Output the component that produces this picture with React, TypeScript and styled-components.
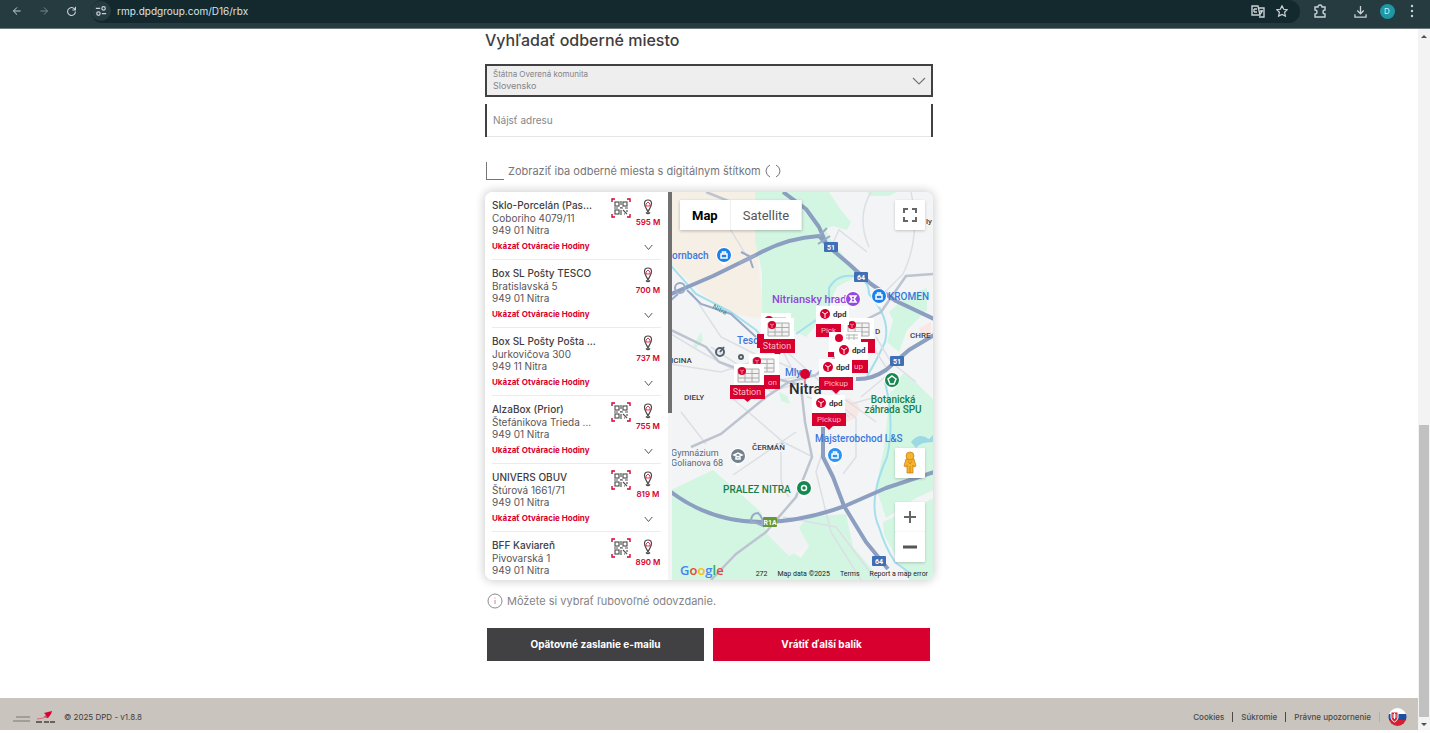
import React from "react";
import styled, { createGlobalStyle } from "styled-components";

const colors = {
  red: "#d8002f",
  dark: "#414042",
  text: "#3f3d3e",
  muted: "#77757a",
};

const GlobalStyle = createGlobalStyle`
  * { box-sizing: border-box; }
  body { margin: 0; background: #fff; font-family: Inter, "Liberation Sans", sans-serif; color: ${colors.text}; }
  button, input, select { font-family: inherit; }
`;

const Window = styled.div`
  display: flex;
  flex-direction: column;
  min-height: 100vh;
  padding-bottom: 3px;
`;

/* Browser bar */
const BrowserBar = styled.header`
  display: flex;
  align-items: center;
  height: 29px;
  padding: 0 0 6px 9px;
  background: #263b40;
  border-bottom: 1px solid #6c797c;
  color: #c9d2d4;
`;

const BarButton = styled.button<{ $dim?: boolean; $width?: number }>`
  display: flex;
  align-items: center;
  justify-content: center;
  flex: none;
  width: ${(p) => p.$width ?? 27}px;
  height: 20px;
  padding: 0;
  border: 0;
  background: none;
  color: inherit;
  opacity: ${(p) => (p.$dim ? 0.5 : 1)};
`;

const AddressBar = styled.div`
  display: flex;
  align-items: center;
  flex: 1;
  height: 23px;
  margin-left: 12px;
  padding-right: 6px;
  border-radius: 12px;
  background: #14292e;
`;

const SiteButton = styled(BarButton)`
  border-radius: 10px;
  background: #263b40;
`;

const AddressInput = styled.input`
  flex: 1;
  min-width: 0;
  padding: 0 0 0 6px;
  border: 0;
  background: none;
  color: #dce4e6;
  font-size: 10px;
`;

const Avatar = styled.span`
  flex: none;
  width: 15px;
  height: 15px;
  border-radius: 50%;
  background: #1f97a5;
  color: #d5f0f3;
  font-size: 8px;
  line-height: 15px;
  text-align: center;
`;

/* Page */
const Viewport = styled.div`
  display: flex;
  flex: 1;
`;

const Page = styled.div`
  display: flex;
  flex-direction: column;
  flex: 1;
  min-width: 0;
`;

const Scrollbar = styled.div`
  display: flex;
  flex-direction: column;
  align-items: center;
  justify-content: flex-end;
  width: 12px;
  padding-top: 6px;
  background: #f3f3f3;
`;

const ScrollSpace = styled.div`
  flex: 1;
`;

const ScrollThumb = styled.div`
  width: 10px;
  height: 42%;
  background: #c1c1c1;
`;

const ScrollArrow = styled.span<{ $down?: boolean }>`
  width: 0;
  border: 3px solid transparent;
  border-width: ${(p) => (p.$down ? "3px 3px 0" : "0 3px 3px")};
  border-${(p) => (p.$down ? "top" : "bottom")}-color: #505050;
  margin: ${(p) => (p.$down ? "6px 0 4px" : "0")};
`;

const Main = styled.main`
  display: flex;
  flex-direction: column;
  flex: 1;
  width: 100%;
  max-width: 448px;
  margin: 0 auto;
  padding: 1px 0 37px;
`;

const Title = styled.h1`
  margin: 0 0 14px;
  font-size: 16px;
  line-height: 20px;
  font-weight: 500;
`;

const CountryField = styled.div`
  position: relative;
  display: flex;
  flex-direction: column;
  height: 33px;
  padding: 2px 6px;
  border: 2px solid ${colors.dark};
  background: #eee;
`;

const FieldLabel = styled.label`
  font-size: 8px;
  line-height: 12px;
  color: #858387;
`;

const CountrySelect = styled.select`
  appearance: none;
  width: 100%;
  height: 12px;
  padding: 0;
  border: 0;
  background: none;
  color: #858387;
  font-size: 9px;
  line-height: 12px;
  opacity: 1;
`;

const SelectArrow = styled.svg`
  position: absolute;
  right: 5px;
  top: 11px;
`;

const AddressField = styled.input`
  width: 100%;
  height: 33px;
  margin: 7px 0 25px;
  padding: 0 6px 2px;
  border: solid ${colors.dark};
  border-width: 0 2px;
  border-radius: 0;
  box-shadow: inset 0 -1px #e6e6e6;
  font-size: 10px;
  &::placeholder { color: #85868c; opacity: 1; }
`;

const CheckRow = styled.div`
  display: flex;
  align-items: center;
  gap: 4px;
  height: 18px;
  margin-bottom: 12px;
  color: ${colors.muted};
  font-size: 11px;
  line-height: 18px;
`;

const CheckBox = styled.input`
  appearance: none;
  width: 18px;
  height: 18px;
  margin: 0 0 0 1px;
  border: solid #77757a;
  border-width: 0 0 1px 1px;
`;

const Finder = styled.section`
  display: flex;
  height: 388px;
  border-radius: 8px;
  overflow: hidden;
  box-shadow: 0 0 8px 2px rgba(0, 0, 0, 0.17);
`;

const PlaceList = styled.ul`
  flex: 0 0 183px;
  height: 100%;
  margin: 0;
  padding: 0;
  overflow: hidden;
  list-style: none;
  background: #fff;
`;

const ListScroll = styled.div`
  flex: 0 0 4px;
  background: linear-gradient(#707070 0 57%, #f5f5f5 57%);
`;

const Place = styled.li`
  display: grid;
  grid-template-columns: minmax(0, 1fr) 28px 26px;
  align-content: start;
  height: 68px;
  margin: 0 7px;
  padding-top: 6px;
  border-bottom: 1px solid #ececec;
`;

const PlaceText = styled.address`
  font-style: normal;
  font-size: 10px;
  line-height: 12px;
  color: #58565a;
  white-space: nowrap;
`;

const PlaceName = styled.div`
  font-weight: 500;
  line-height: 14px;
  color: ${colors.text};
`;

const PlaceIcon = styled.div`
  display: flex;
  flex-direction: column;
  align-items: center;
  height: 38px;
  font-size: 8px;
  line-height: 12px;
  font-weight: 600;
  color: ${colors.red};
  white-space: nowrap;
`;

const HoursButton = styled.button`
  display: flex;
  grid-column: 1 / -1;
  align-items: center;
  justify-content: space-between;
  height: 12px;
  margin-top: 4px;
  padding: 0 8px 0 0;
  border: 0;
  background: none;
  color: ${colors.red};
  font-size: 8px;
  line-height: 12px;
  font-weight: 700;
`;

const MapPanel = styled.div`
  position: relative;
  flex: 1;
  min-width: 0;
  background: #f2f3f5;
`;

const MapSvg = styled.svg`
  display: block;
  width: 100%;
  height: 100%;
`;

const MapTypes = styled.div`
  position: absolute;
  left: 8px;
  top: 8px;
  display: flex;
  box-shadow: 0 1px 3px rgba(0, 0, 0, 0.25);
`;

const MapTypeButton = styled.button<{ $active?: boolean }>`
  height: 30px;
  padding: 0 12px;
  border: 0;
  border-right: 1px solid #eee;
  background: #fff;
  color: ${(p) => (p.$active ? "#000" : "#565656")};
  font-family: Roboto, sans-serif;
  font-size: 13px;
  font-weight: ${(p) => (p.$active ? 700 : 400)};
`;

const MapTools = styled.div`
  position: absolute;
  inset: 8px 8px 18px auto;
  display: flex;
  flex-direction: column;
  width: 30px;
`;

const MapTool = styled.button<{ $bottom?: boolean; $gap?: number }>`
  display: flex;
  align-items: center;
  justify-content: center;
  height: 30px;
  margin-top: ${(p) => (p.$bottom ? "auto" : "0")};
  margin-bottom: ${(p) => p.$gap ?? 0}px;
  padding: 0;
  border: 0;
  border-radius: 1px;
  background: #fff;
  box-shadow: 0 1px 3px rgba(0, 0, 0, 0.2);
`;

const MapCredits = styled.div`
  position: absolute;
  left: 8px;
  right: 5px;
  bottom: 1px;
  display: flex;
  align-items: flex-end;
  justify-content: space-between;
  color: #222;
  font-family: Roboto, sans-serif;
  font-size: 7px;
  line-height: 10px;
  white-space: nowrap;
`;

const CreditLinks = styled.div`
  display: flex;
  gap: 10px;
`;

const CreditLink = styled.a`
  color: inherit;
  text-decoration: none;
`;

const GoogleMark = styled.span`
  font-family: "Open Sans", sans-serif;
  font-size: 13px;
  line-height: 18px;
  font-weight: 600;
`;

const Letter = styled.span<{ $color: string }>`
  color: ${(p) => p.$color};
`;

const Note = styled.p`
  display: flex;
  align-items: center;
  gap: 4px;
  margin: 12px 0 18px;
  padding-left: 2px;
  color: #858387;
  font-size: 11px;
  line-height: 18px;
`;

const Actions = styled.div`
  display: grid;
  grid-template-columns: 1fr 1fr;
  gap: 9px;
  padding: 0 3px 0 2px;
`;

const ActionButton = styled.button<{ $primary?: boolean }>`
  height: 33px;
  padding: 0 0 2px;
  border: 0;
  background: ${(p) => (p.$primary ? colors.red : colors.dark)};
  color: #fff;
  font-size: 10px;
  font-weight: 700;
`;

const Footer = styled.footer`
  display: flex;
  align-items: center;
  justify-content: space-between;
  height: 32px;
  padding: 6px 11px 0 13px;
  background: #cac4be;
  font-size: 8px;
  line-height: 12px;
`;

const FooterGroup = styled.div<{ $gap?: number }>`
  display: flex;
  align-items: center;
  gap: ${(p) => p.$gap ?? 8}px;
`;

const FooterLink = styled.a`
  padding-right: 8px;
  border-right: 1px solid #4b4846;
  color: #4b4846;
  font-weight: 500;
  line-height: 10px;
  text-decoration: none;
  &:last-of-type { border-color: #b5afaa; }
`;

const Version = styled.span`
  font-size: 8px;
`;

const places = [
  { name: "Sklo-Porcelán (Pas...", street: "Coboriho 4079/11", city: "949 01 Nitra", distance: "595 M", qr: true, hours: true },
  { name: "Box SL Pošty TESCO", street: "Bratislavská 5", city: "949 01 Nitra", distance: "700 M", qr: false, hours: true },
  { name: "Box SL Pošty Pošta ...", street: "Jurkovičova 300", city: "949 11 Nitra", distance: "737 M", qr: false, hours: true },
  { name: "AlzaBox (Prior)", street: "Štefánikova Trieda ...", city: "949 01 Nitra", distance: "755 M", qr: true, hours: true },
  { name: "UNIVERS OBUV", street: "Štúrová 1661/71", city: "949 01 Nitra", distance: "819 M", qr: true, hours: true },
  { name: "BFF Kaviareň", street: "Pivovarská 1", city: "949 01 Nitra", distance: "890 M", qr: true, hours: false },
];

const QrIcon = () => (
  <svg width="20" height="20" viewBox="0 0 20 20" aria-hidden="true">
    <path d="M1 4V1h3M16 1h3v3M19 16v3h-3M4 19H1v-3" fill="none" stroke={colors.red} strokeWidth="1.4" />
    <g fill="none" stroke="#555" strokeWidth="1.2">
      <rect x="4" y="4" width="4" height="4" />
      <rect x="12" y="4" width="4" height="4" />
      <rect x="4" y="12" width="4" height="4" />
      <path d="M10 3v4M3 10h4M9 10h3M14 10h3M10 12v5M12 12l4 4M13 16h1M16 12v2M10 9v1" />
    </g>
  </svg>
);

const PinIcon = () => (
  <svg width="10" height="18" viewBox="0 0 10 18" aria-hidden="true">
    <path d="M5 14C4 11 1.500 9 1.500 5.500a3.500 3.500 0 0 1 7 0C8.500 9 6 11 5 14z" fill="none" stroke="#4a484a" strokeWidth="1.200" />
    <path d="M3 6l2-2 2 2v2H3z" fill="none" stroke={colors.red} strokeWidth=".8" />
    <path d="M3 14.500q2 2 4 0" fill="none" stroke="#4a484a" strokeWidth="1.500" />
  </svg>
);

const Chevron = ({ size = 9 }: { size?: number }) => (
  <svg width={size} height={size} viewBox="0 0 12 12" fill="none" stroke="#555" aria-hidden="true">
    <path d="M1 4l5 6 5-6" strokeWidth="1.300" />
  </svg>
);

const Line = ({ children, size = 14 }: { children: React.ReactNode; size?: number }) => (
  <svg width={size} height={size} viewBox="0 0 14 14" fill="none" stroke="currentColor" strokeWidth="1.400" aria-hidden="true">
    {children}
  </svg>
);

/* Locker marker: a white card with a cabinet and the red name plate below. */
const StationPin = ({ x, y, label, pointer }: { x: number; y: number; label?: string; pointer?: boolean }) => (
  <g transform={`translate(${x} ${y})`}>
    <rect x="4" width="30" height="22" fill="#fff" />
    <rect y="21" width="35" height="14" fill={colors.red} />
    {pointer && <path d="M14 35h7l-3.500 3z" fill={colors.red} />}
    <path d="M8 5h21v13H8zM8 9.500h21M8 14h21M15 5v13M22 5v13" fill="#f3f3f3" stroke="#aaa" strokeWidth="1" />
    <circle cx="12" cy="7" r="4" fill={colors.red} />
    <path d="M10 6l2 1 2-1M12 7v3" stroke="#f6a2b2" strokeWidth=".8" fill="none" />
    {label && <text x="17" y="31" fill="#ffb9c6" fontSize="9" textAnchor="middle">{label}</text>}
  </g>
);

/* Parcel shop marker: the logo card and its name plate. */
const PickupPin = ({ x, y, label = "Pickup", plateX = 0, plateWidth = 34, pointer }: { x: number; y: number; label?: string; plateX?: number; plateWidth?: number; pointer?: boolean }) => (
  <g transform={`translate(${x} ${y})`}>
    <rect width="33" height="19" fill="#fff" />
    <rect x={plateX} y="18" width={plateWidth} height="13" fill={colors.red} />
    {pointer && <path d="M13 31h8l-4 4z" fill={colors.red} />}
    <circle cx="9" cy="8" r="5" fill={colors.red} />
    <path d="M6 6l3 2 3-2M9 8v4" stroke="#fff" strokeWidth="1" fill="none" />
    <text x="17" y="11" fill="#333" fontSize="8" fontWeight="700">dpd</text>
    <text x={plateX + plateWidth / 2} y="27" fill="#ffb9c6" fontSize="8" textAnchor="middle">{label}</text>
  </g>
);

const PoiDot = ({ x, y, color, children }: { x: number; y: number; color: string; children?: React.ReactNode }) => (
  <g transform={`translate(${x} ${y})`}>
    <path d="M-8 0a8 8 0 0 1 16 0c0 5-5 7-8 11C-3 7-8 5-8 0z" fill="#fff" />
    <circle r="7" fill={color} />
    <g fill="none" stroke="#fff" strokeWidth="1.500">{children}</g>
  </g>
);

const bag = <path d="M-3 -1h6v4h-6zM-1.500 -1v-2h3v2" />;

const Shield = ({ x, y, label, color = "#3f6fb5" }: { x: number; y: number; label: string; color?: string }) => (
  <g transform={`translate(${x} ${y})`}>
    <rect x="-7" y="-5" width="14" height="10" rx="1" fill={color} />
    <text y="3" fill="#fff" fontSize="7" fontWeight="700" textAnchor="middle">{label}</text>
  </g>
);

const CityMap = () => (
  <MapSvg viewBox="0 0 263 388" preserveAspectRatio="xMidYMid slice" fontFamily="Roboto, sans-serif" role="img" aria-label="Nitra">
    <rect width="263" height="388" fill="#f3f4f6" />
    <path d="M0 0H90L87 70 93 123 85 126 50 119 0 72z" fill="#f6efe5" />
    <g fill="#d3f6e2">
      <path d="M84 0H140L158 45 176 68 190 82 166 95 158 112 150 127 135 145 115 135 91 125 91 80 84 50z" />
      <path d="M135 0h23l12 18 10 12-4 8-14-4-12 4zM196 0h30l-8 4h-18z" />
      <path d="M218 120l20-18 18-6v22l-20 20-8 22-12-10 6-22zM24 158l8-10 -2-8-8 14z" />
      <path d="M220 195l14-15 29 28v90l-18 8-30 20-10-30 8-40z" />
      <path d="M0 298L42 278 90 320 96 342 130 366 138 354 125 340 135 325 175 322 182 355 210 388H0z" />
      <path d="M212 330l51-24v82h-25l-25-45zM108 200l8 4 3 8-9-3z" />
    </g>
    <path d="M96 342l22 22 20-10-10-18 8-10-24 4z" fill="#f1f2f4" />
    <path d="M175 230q18-6 12-18l-10-6-12 20zM248 136l12-6v14l-10-2z" fill="#f8e7e4" />

    <g fill="none" stroke="#a3e0ec" strokeWidth="2">
      <path d="M0 74L25 102 60 120 85 138 101 158" />
      <path d="M158 115V96Q166 82 182 84T198 102Q220 126 214 150 205 170 196 184M214 190Q224 230 216 265 196 310 208 335 214 355 224 370L240 382" />
      <path d="M125 142L145 128" />
    </g>
    <path d="M240 250q8-10 18-3l5-5v8q-14 0-18 6z" fill="#9cd9e4" />

    <g fill="none" stroke="#dcdfe5" strokeWidth="1.500">
      <path d="M58 35L78 68M160 55L168 38 196 60M200 0Q185 25 198 55M240 0Q250 45 232 82L214 100" />
      <path d="M0 142L30 160 90 192 140 182 175 208 205 230M0 172L50 180 95 165 130 180" />
      <path d="M40 155L75 178 100 200 130 190M10 220L35 252M60 205L112 250 142 265M62 283L125 240M136 205L165 212 178 225" />
      <path d="M20 100L50 145 90 165 110 150M116 160L155 195 180 212 205 205M100 135L120 175 140 198M165 210L185 226 185 265 172 282" />
      <path d="M110 260V285Q110 295 118 305M152 258L145 280 160 340 190 388M112 325L165 335 180 355 205 388" />
      <path d="M205 145L220 170 245 190M192 140L215 175M220 180L190 205" />
    </g>
    <g fill="none" stroke="#bdc4d0" strokeWidth="2.500">
      <path d="M35 0L60 10 40 30M0 138L35 155 48 170 70 178 95 184 125 192" />
      <path d="M20 255L50 242 95 205 118 190 145 183M130 195L134 230 141 265 125 305 95 340 65 362 40 388" />
      <path d="M263 82L235 84 210 120 190 130M145 183L170 160" />
    </g>
    <g fill="none" stroke="#8c9fc0" strokeWidth="4" strokeLinejoin="round">
      <path d="M0 102L14 96 42 84 85 63Q115 46 148 44L158 55 178 72 200 92 225 109 263 127" />
      <path d="M112 0L135 17 148 35 155 51M185 187Q200 188 215 178L238 158 263 143" />
      <path d="M0 300Q40 330 90 330 130 330 174 314L215 296 263 280" />
      <path d="M152 235L152 265 162 285 173 314 195 350 217 377" />
    </g>
    <g fill="none" stroke="#9aa9c5" strokeWidth="2">
      <circle cx="9" cy="96" r="5" />
      <path d="M70 60l8 4 4 12M68 71l17-8M16 98L30 112 60 122 85 145M0 108l7-6" />
      <path d="M80 330q0-9 7-9 5 4 5 13l-9-4z" />
      <path d="M148 44l8-8M147 52l12-8" />
    </g>

    <g fontSize="10" fontWeight="500" fill="#3b78dc">
      <text x="1" y="67">ornbach</text>
      <text x="217" y="108">KROMEN</text>
      <text x="66" y="152">Tesc</text>
      <text x="114" y="184">Mlyny</text>
      <text x="144" y="250">Majsterobchod L&amp;S</text>
    </g>
    <text x="101" y="111" fontSize="11" fontWeight="500" fill="#9145d9">Nitriansky hrad</text>
    <text x="41" y="116" fontSize="7" fill="#298b9b" transform="rotate(28 41 116)">Nitra</text>
    <g fontSize="8" fontWeight="500" fill="#3b4046">
      <text x="0" y="171">ICINA</text>
      <text x="13" y="208">DIELY</text>
      <text x="81" y="258">ČERMÁŇ</text>
      <text x="204" y="142">D</text>
      <text x="239" y="146">CHRE</text>
      <text x="255" y="32">ly</text>
    </g>
    <g fontSize="9" fill="#5b6975">
      <text x="0" y="264">Gymnázium</text>
      <text x="0" y="274">Golianova 68</text>
    </g>
    <g fontSize="10" fontWeight="500" fill="#16804b">
      <text x="52" y="301">PRALEZ NITRA</text>
      <text x="222" y="211" textAnchor="middle">Botanická</text>
      <text x="222" y="221" textAnchor="middle">záhrada SPU</text>
    </g>
    <PoiDot x={53} y={63} color="#1c80eb">{bag}</PoiDot>
    <PoiDot x={208} y={104} color="#1c80eb">{bag}</PoiDot>
    <PoiDot x={164} y={263} color="#2b93f0">{bag}</PoiDot>
    <PoiDot x={182} y={107} color="#9349e0"><path d="M-3 3h6l-2-3 2-3h-6l2 3z" /></PoiDot>
    <PoiDot x={221} y={188} color="#16884f"><path d="M0-4l4 3-2 5h-4l-2-5z" /></PoiDot>
    <PoiDot x={133} y={296} color="#16884f"><circle r="2.500" /></PoiDot>
    <PoiDot x={67} y={264} color="#71818e"><path d="M-4-1l4-2 4 2-4 2zM-2 1v2h4v-2" /></PoiDot>
    <g fill="none" stroke="#53616d" strokeWidth="2">
      <circle cx="49" cy="160" r="4" />
      <path d="M49 160l4-5" />
      <circle cx="70" cy="165" r="2" />
    </g>
    <Shield x={160} y={55} label="51" />
    <Shield x={190} y={85} label="64" />
    <Shield x={226} y={169} label="51" />
    <Shield x={208} y={369} label="64" />
    <Shield x={99} y={330} label="R1A" color="#67993a" />

    <text x="118" y="202" fontSize="15" fontWeight="500" fill="#29292b">Nitra</text>
    <path d="M134 183v12" stroke="#c33650" strokeWidth="1" />
    <circle cx="134" cy="182" r="5" fill={colors.red} />

    <StationPin x={86} y={121} />
    <StationPin x={89} y={126} label="Station" pointer />
    <StationPin x={74} y={162} />
    <text x="97" y="193" fill="#ffb9c6" fontSize="8">on</text>
    <StationPin x={59} y={172} label="Station" pointer />
    <StationPin x={169} y={126} />
    <PickupPin x={145} y={114} plateWidth={25} label="Pick" />
    <g transform="translate(158 140)">
      <rect width="32" height="20" fill="#fff" />
      <circle cx="10" cy="6" r="4" fill={colors.red} />
      <path d="M17 3h12M17 6h12M20 2v6M25 2v6" stroke="#b5b5b5" strokeWidth="1" />
      <rect x="-1" y="20" width="6" height="5" fill={colors.red} />
    </g>
    <PickupPin x={164} y={150} plateX={14} plateWidth={19} label="up" />
    <PickupPin x={148} y={167} pointer />
    <PickupPin x={141} y={203} pointer />
  </MapSvg>
);

export default function App() {
  return (
    <Window>
      <GlobalStyle />
      <BrowserBar>
        <BarButton $width={16} aria-label="Back"><Line size={10}><path d="M12 7H2M7 2L2 7l5 5" /></Line></BarButton>
        <BarButton $width={38} $dim aria-label="Forward"><Line size={10}><path d="M2 7h10M7 2l5 5-5 5" /></Line></BarButton>
        <BarButton $width={16} aria-label="Reload"><Line size={11}><path d="M12 7a5 5 0 1 1-2-4l2 2M12 1v4H8" /></Line></BarButton>
        <AddressBar>
          <SiteButton $width={20} aria-label="Site information">
            <Line size={12}><path d="M1 4h5M8 10h5" /><circle cx="10" cy="4" r="2" /><circle cx="4" cy="10" r="2" /></Line>
          </SiteButton>
          <AddressInput aria-label="Address" defaultValue="rmp.dpdgroup.com/D16/rbx" />
          <BarButton $width={24} aria-label="Translate">
            <Line><path d="M1 2h6l2 9H1zM7 4h6v9H8M3 5h3M3 8h3M3 5v3M9 7h3M11 6q0 3-2 4" /></Line>
          </BarButton>
          <BarButton $width={24} aria-label="Bookmark">
            <Line size={12}><path d="M7 1l2 4 4 .5-3 3 1 4.500-4-2-4 2 1-4.500-3-3L5 5z" /></Line>
          </BarButton>
        </AddressBar>
        <BarButton $width={40} aria-label="Extensions">
          <Line size={14}><path d="M2 3h3q0-2 2-2t2 2h3v3q-2 0-2 2t2 2v3H2v-3q2 0 2-2t-2-2z" /></Line>
        </BarButton>
        <BarButton $width={40} aria-label="Downloads">
          <Line size={13}><path d="M7 1v8M3.500 6L7 9.500 10.500 6M1 10v3h12v-3" /></Line>
        </BarButton>
        <BarButton $width={14} aria-label="Profile"><Avatar>D</Avatar></BarButton>
        <BarButton $width={36} aria-label="Menu">
          <svg width="4" height="14" viewBox="0 0 4 14" fill="currentColor" aria-hidden="true">
            <circle cx="2" cy="2" r="1.200" /><circle cx="2" cy="7" r="1.200" /><circle cx="2" cy="12" r="1.200" />
          </svg>
        </BarButton>
      </BrowserBar>

      <Viewport>
        <Page>
          <Main>
            <Title>Vyhľadať odberné miesto</Title>
            <CountryField>
              <FieldLabel htmlFor="country">Štátna Overená komunita</FieldLabel>
              <CountrySelect id="country" defaultValue="sk" disabled>
                <option value="sk">Slovensko</option>
              </CountrySelect>
              <SelectArrow width="14" height="10" viewBox="0 0 14 10" fill="none" stroke="#77757a" aria-hidden="true">
                <path d="M1 1l6 6 6-6" strokeWidth="1.200" />
              </SelectArrow>
            </CountryField>
            <AddressField placeholder="Nájsť adresu" aria-label="Nájsť adresu" />
            <CheckRow>
              <CheckBox id="digital" type="checkbox" />
              <label htmlFor="digital">Zobraziť iba odberné miesta s digitálnym štítkom</label>
              <svg width="16" height="16" viewBox="0 0 16 16" fill="none" stroke="#77757a" aria-hidden="true">
                <path d="M5 2q-4 2-4 6t4 6M11 2q4 2 4 6t-4 6" />
              </svg>
            </CheckRow>

            <Finder>
              <PlaceList>
                {places.map((place) => (
                  <Place key={place.name}>
                    <PlaceText>
                      <PlaceName>{place.name}</PlaceName>
                      <div>{place.street}</div>
                      <div>{place.city}</div>
                    </PlaceText>
                    <PlaceIcon>{place.qr && <QrIcon />}</PlaceIcon>
                    <PlaceIcon>
                      <PinIcon />
                      {place.distance}
                    </PlaceIcon>
                    {place.hours && (
                      <HoursButton>
                        Ukázať Otváracie Hodiny
                        <Chevron />
                      </HoursButton>
                    )}
                  </Place>
                ))}
              </PlaceList>
              <ListScroll />
              <MapPanel>
                <CityMap />
                <MapTypes>
                  <MapTypeButton $active>Map</MapTypeButton>
                  <MapTypeButton>Satellite</MapTypeButton>
                </MapTypes>
                <MapTools>
                  <MapTool aria-label="Full screen">
                    <svg width="14" height="14" viewBox="0 0 14 14" fill="none" stroke="#666" strokeWidth="2" aria-hidden="true">
                      <path d="M1 5V1h4M9 1h4v4M13 9v4H9M5 13H1V9" />
                    </svg>
                  </MapTool>
                  <MapTool $bottom $gap={24} aria-label="Street View">
                    <svg width="16" height="24" viewBox="0 0 16 24" fill="#f5b42c" stroke="#c77a12" strokeWidth=".7" aria-hidden="true">
                      <path d="M4 8h8l2 7-2 1-1-2v8H5v-8l-1 2-2-1z" />
                      <circle cx="8" cy="5" r="4" />
                      <path d="M6 10l2 3 2-3M8 15v7" fill="none" />
                    </svg>
                  </MapTool>
                  <MapTool aria-label="Zoom in">
                    <svg width="14" height="14" viewBox="0 0 14 14" stroke="#666" strokeWidth="2" aria-hidden="true"><path d="M7 1v12M1 7h12" /></svg>
                  </MapTool>
                  <MapTool aria-label="Zoom out">
                    <svg width="14" height="14" viewBox="0 0 14 14" stroke="#555" strokeWidth="3" aria-hidden="true"><path d="M0 7h14" /></svg>
                  </MapTool>
                </MapTools>
                <MapCredits>
                  <GoogleMark>
                    <Letter $color="#4285f4">G</Letter>
                    <Letter $color="#ea4335">o</Letter>
                    <Letter $color="#fbbc05">o</Letter>
                    <Letter $color="#4285f4">g</Letter>
                    <Letter $color="#34a853">l</Letter>
                    <Letter $color="#ea4335">e</Letter>
                  </GoogleMark>
                  <CreditLinks>
                    <span>272</span>
                    <span>Map data ©2025</span>
                    <CreditLink href="#terms">Terms</CreditLink>
                    <CreditLink href="#report">Report a map error</CreditLink>
                  </CreditLinks>
                </MapCredits>
              </MapPanel>
            </Finder>

            <Note>
              <svg width="16" height="16" viewBox="0 0 16 16" fill="none" stroke="#8b898c" aria-hidden="true">
                <circle cx="8" cy="8" r="7" />
                <path d="M8 7v4M8 4.500v1" stroke="#c08a96" />
              </svg>
              Môžete si vybrať ľubovoľné odovzdanie.
            </Note>
            <Actions>
              <ActionButton>Opätovné zaslanie e-mailu</ActionButton>
              <ActionButton $primary>Vrátiť ďalší balík</ActionButton>
            </Actions>
          </Main>

          <Footer>
            <FooterGroup>
              <svg width="43" height="14" viewBox="0 0 43 14" aria-hidden="true">
                <path d="M3 7h14M0 11h17" stroke="#7c7773" strokeWidth="1.200" />
                <path d="M23 12h6M31 12h5M37 12h5" stroke="#4b4040" strokeWidth="1.600" />
                <path d="M31 3l8-2-1 3-3 4-4-1 2-2z" fill={colors.red} />
                <path d="M24 9q6 0 10-3" stroke="#d76a7d" fill="none" />
              </svg>
              <Version>© 2025 DPD - v1.8.8</Version>
            </FooterGroup>
            <FooterGroup>
              <FooterLink href="#cookies">Cookies</FooterLink>
              <FooterLink href="#sukromie">Súkromie</FooterLink>
              <FooterLink href="#pravne">Právne upozornenie</FooterLink>
              <svg width="19" height="18" viewBox="0 0 19 18" role="img" aria-label="Slovensko">
                <clipPath id="flag"><circle cx="9.500" cy="9" r="9" /></clipPath>
                <g clipPath="url(#flag)">
                  <path d="M0 0h19v6H0z" fill="#fff" />
                  <path d="M0 6h19v6H0z" fill="#1c4ea1" />
                  <path d="M0 12h19v6H0z" fill="#d61f32" />
                  <path d="M3 4h7v6q-1 3-3.500 4Q4 13 3 10z" fill="#d61f32" stroke="#fff" />
                  <path d="M6.500 5v6M4.500 7h4M4.500 9h4" stroke="#fff" />
                </g>
              </svg>
            </FooterGroup>
          </Footer>
        </Page>
        <Scrollbar aria-hidden="true">
          <ScrollArrow />
          <ScrollSpace />
          <ScrollThumb />
          <ScrollArrow $down />
        </Scrollbar>
      </Viewport>
    </Window>
  );
}
